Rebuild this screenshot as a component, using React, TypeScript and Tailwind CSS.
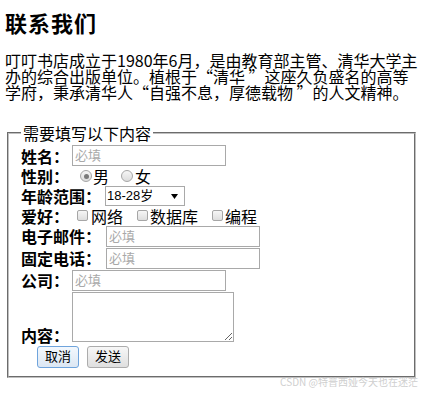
const cjk = "font-['Noto_Sans_CJK_SC',sans-serif]";
const ui = "font-['Liberation_Sans','Noto_Sans_CJK_SC',sans-serif]";

function Label({ children }: { children: string }) {
  return <span className="shrink-0 text-[16px] leading-[18px] font-bold text-black">{children}</span>;
}

function TextInput({ className = "" }: { className?: string }) {
  return (
    <input
      type="text"
      placeholder="必填"
      className={`h-[21px] w-[154px] border border-[#a9a9a9] bg-white px-[2px] text-[13px] leading-[19px] outline-none placeholder:text-[#a9a9a9] ${ui} ${className}`}
    />
  );
}

function Radio({ checked }: { checked?: boolean }) {
  return (
    <span className="flex h-[12px] w-[12px] shrink-0 items-center justify-center rounded-full border border-[#a6a6a6] bg-linear-to-b from-[#f6f6f6] to-[#dcdcdc]">
      {checked && <span className="h-[5px] w-[5px] rounded-full bg-[#7a7a7a]" />}
    </span>
  );
}

function Checkbox() {
  return (
    <span className="block h-[11px] w-[11px] shrink-0 rounded-[2px] border border-[#a6a6a6] bg-linear-to-b from-[#f6f6f6] to-[#dedede]" />
  );
}

export default function App() {
  return (
    <div className={`relative min-h-[393px] bg-white px-[5px] text-black ${cjk}`}>
      <h2 className="pt-[10px] text-[22px] leading-[24px] font-bold tracking-[1px]">联系我们</h2>

      <p className="mt-[18px] text-[16px] leading-[16px] whitespace-nowrap">
        叮叮书店成立于1980年6月，是由教育部主管、清华大学主
        <br />
        办的综合出版单位。植根于“清华 ”这座久负盛名的高等
        <br />
        学府，秉承清华人“自强不息，厚德载物 ”的人文精神。
      </p>

      <fieldset className="mx-[2px] mt-[24px] border-2 border-[#c0c0c0] px-[12px] pt-[2px] pb-[8px] [border-style:groove]">
        <legend className="px-[2px] text-[16px] leading-[18px]">需要填写以下内容</legend>

        <div className="flex flex-col">
          {/* 姓名 */}
          <div className="flex h-[23px] items-center">
            <Label>姓名：</Label>
            <TextInput className="ml-[3px]" />
          </div>

          {/* 性别 */}
          <div className="flex h-[18px] items-center text-[16px] leading-[18px]">
            <Label>性别：</Label>
            <span className="ml-[11px]"><Radio checked /></span>
            <span className="ml-[1px]">男</span>
            <span className="ml-[12px]"><Radio /></span>
            <span className="ml-[2px]">女</span>
          </div>

          {/* 年龄范围 */}
          <div className="flex h-[21px] items-center">
            <Label>年龄范围：</Label>
            <span className="relative ml-[4px] block">
              <select
                className={`block h-[20px] w-[80px] appearance-none border border-[#a9a9a9] bg-white pl-[1px] text-[13px] leading-[18px] outline-none ${ui}`}
                defaultValue="18-28岁"
              >
                <option>18-28岁</option>
                <option>29-40岁</option>
                <option>40岁以上</option>
              </select>
              <svg className="pointer-events-none absolute top-[8px] right-[7px]" width="7" height="5" viewBox="0 0 7 5">
                <polygon points="0,0 7,0 3.5,5" fill="#000" />
              </svg>
            </span>
          </div>

          {/* 爱好 */}
          <div className="flex h-[19px] items-center text-[16px] leading-[18px]">
            <Label>爱好：</Label>
            <span className="ml-[8px]"><Checkbox /></span>
            <span className="ml-[3px]">网络</span>
            <span className="ml-[14px]"><Checkbox /></span>
            <span className="ml-[2px]">数据库</span>
            <span className="ml-[14px]"><Checkbox /></span>
            <span className="ml-[2px]">编程</span>
          </div>

          {/* 电子邮件 */}
          <div className="flex h-[22px] items-center">
            <Label>电子邮件：</Label>
            <TextInput className="ml-[5px]" />
          </div>

          {/* 固定电话 */}
          <div className="flex h-[22px] items-center">
            <Label>固定电话：</Label>
            <TextInput className="ml-[5px]" />
          </div>

          {/* 公司 */}
          <div className="flex h-[22px] items-center">
            <Label>公司：</Label>
            <TextInput className="ml-[3px]" />
          </div>

          {/* 内容 */}
          <div className="flex h-[53px] items-end">
            <Label>内容：</Label>
            <textarea className="mb-[2px] ml-[3px] block h-[50px] w-[162px] border border-[#a9a9a9] bg-white outline-none" />
          </div>

          {/* buttons */}
          <div className={`mt-[2px] flex h-[22px] items-center text-[13px] ${ui}`}>
            <button className="ml-[16px] h-[22px] w-[42px] rounded-[3px] border border-[#6fa4dc] bg-linear-to-b from-[#f3f8fd] to-[#dce7f3] leading-[20px]">
              取消
            </button>
            <button className="ml-[8px] h-[22px] w-[42px] rounded-[3px] border border-[#acacac] bg-linear-to-b from-[#f7f7f7] to-[#dfdfdf] leading-[20px]">
              发送
            </button>
          </div>
        </div>
      </fieldset>

      <span className="absolute top-[376px] right-[5px] text-[10px] leading-[12px] whitespace-nowrap text-[#cfcfcf]">
        CSDN @特普西娅今天也在迷茫
      </span>
    </div>
  );
}
